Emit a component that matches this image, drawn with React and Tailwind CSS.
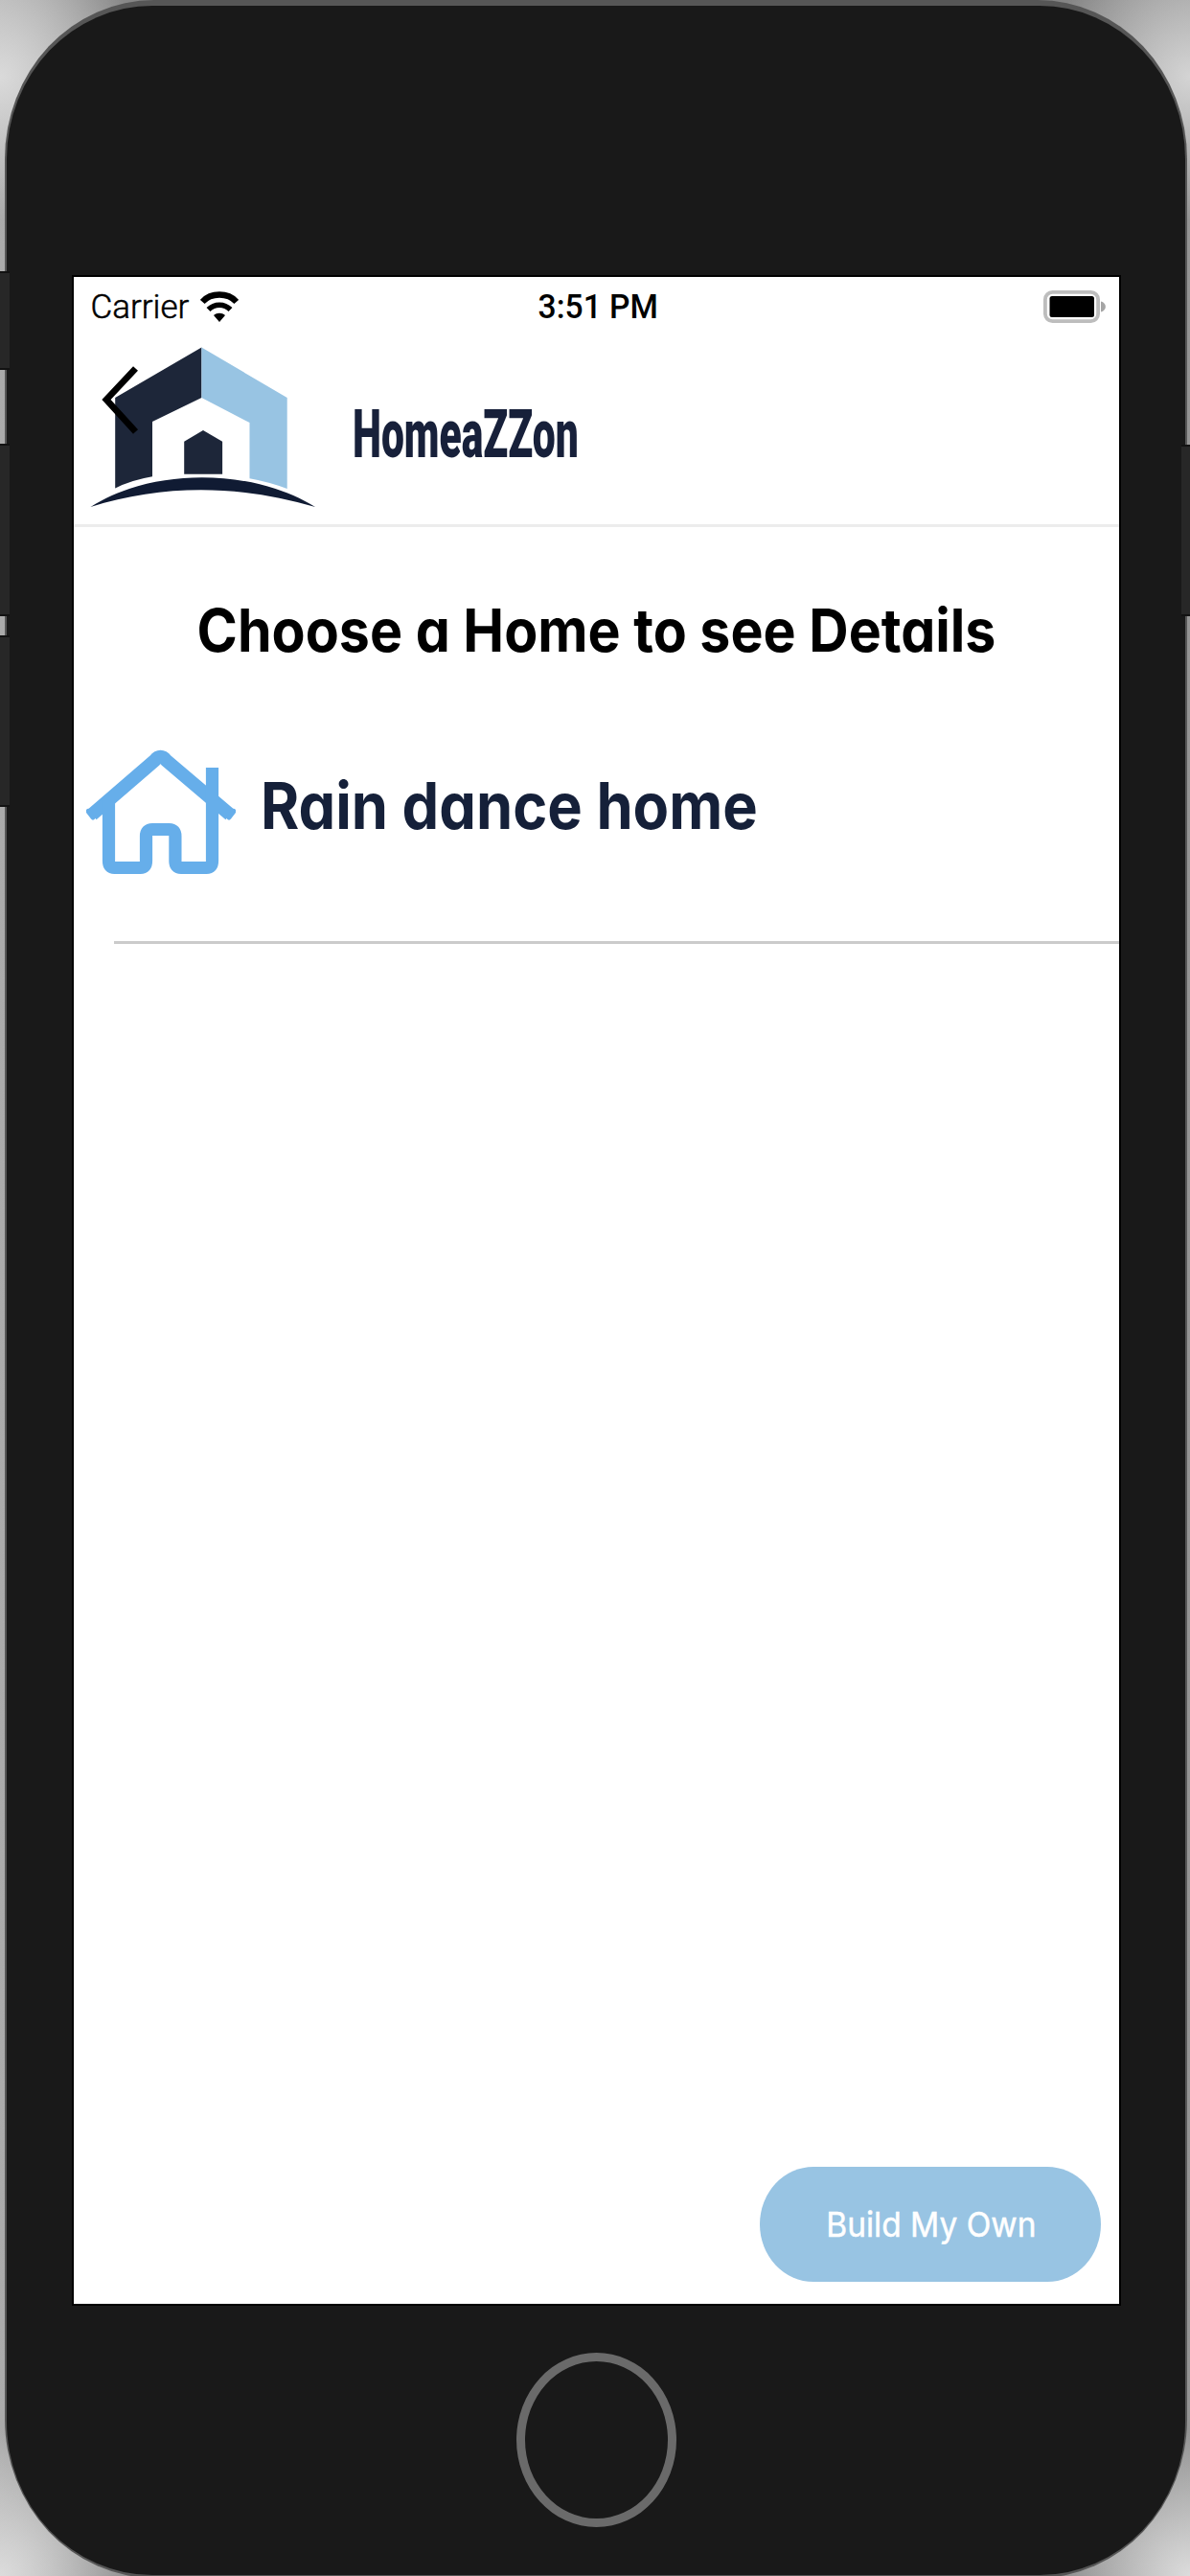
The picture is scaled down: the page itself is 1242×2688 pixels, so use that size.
import React from "react";

function SideButton({ className }) {
  return <div className={"absolute border-y-2 border-[#121212] bg-[#272727] " + className} />;
}

function WifiIcon() {
  return (
    <svg className="ml-[12px] h-8 w-10" viewBox="0 0 40 32" preserveAspectRatio="none" fill="none" stroke="#000" strokeWidth="6.4">
      <path d="M2.200 11 C11 1 29 1 37.800 11" />
      <path d="M8.500 19 C15 12.600 25 12.600 31.500 19" strokeWidth="5.600" />
      <path d="M14 25 C17.500 22 22.500 22 26 25 L20 32 Z" fill="#000" stroke="none" />
    </svg>
  );
}

function BatteryIcon() {
  return (
    <svg className="h-[34px] w-[66px]" viewBox="0 0 66 34">
      <rect x="1.900" y="1.900" width="55.200" height="30.200" rx="7.500" fill="#fff" stroke="#bdbdbd" strokeWidth="3.800" />
      <rect x="6.500" y="6" width="46.500" height="22" rx="2.500" fill="#000" />
      <path d="M60 11.500 C66.500 13 66.500 21 60 22.500 Z" fill="#a5a5a5" />
    </svg>
  );
}

function Logo() {
  return (
    <svg className="h-[170px] w-[236px] shrink-0" viewBox="94 361 236 170">
      <path d="M210.400 362.500 L120.200 415 V509.500 Q137 501 159 497.300 V440 L210.400 415 Z" fill="#1d2639" />
      <path d="M210.400 362.500 L299.700 415 V510 Q281 503 260.500 499.300 V441 L210.400 415 Z" fill="#98c4e3" />
      <path d="M212 449 L232.100 460.700 V494.700 H192.200 V460.700 Z" fill="#1d2639" />
      <path d="M94.500 529 C160 487 265 489 329 529 C250 505.500 170 505 94.500 529 Z" fill="#101b33" />
      <path d="M141.500 384.500 L111 417 L141.500 450.500" fill="none" stroke="#000" strokeWidth="6.800" />
    </svg>
  );
}

function HomeIcon() {
  return (
    <svg className="h-[131px] w-[156px] shrink-0" viewBox="90.500 781.500 156 131" fill="none" stroke="#66aeea" strokeWidth="13.200" strokeLinejoin="round">
      <path d="M96.500 849.500 L162 793 Q168 785.500 174 793 L240.500 849.500" strokeWidth="14" />
      <path d="M92.500 846 L97.500 852.500 M244.500 846 L239.500 852.500" strokeWidth="5" strokeLinecap="round" />
      <path d="M222 800.500 V898 Q222 905 216 905 H189.500 Q183.400 905 183.400 898 V872 Q183.400 865 177 865 H159.500 Q153 865 153 872 V898 Q153 905 147 905 H120 Q114 905 114 898 V834" />
    </svg>
  );
}

function StatusBar() {
  return (
    <div className="grid h-[62px] grid-cols-[1fr_auto_1fr] items-center pl-[18px] pr-[13px] font-['Roboto',sans-serif] text-[35px] leading-none text-black">
      <div className="flex items-center">
        <span className="font-light [-webkit-text-stroke:0.5px_#000]">Carrier</span>
        <WifiIcon />
      </div>
      <span className="inline-block origin-center scale-x-[.96] font-medium">3:51 PM</span>
      <div className="flex justify-end">
        <BatteryIcon />
      </div>
    </div>
  );
}

function Header() {
  return (
    <header className="flex h-[199px] items-start border-b-[3px] border-[#ececec] pl-[17px] pt-[10px]">
      <Logo />
      <span className="ml-[38px] mt-[57px] inline-block origin-left scale-x-[.608] whitespace-nowrap font-['Roboto',sans-serif] text-[70px] font-black leading-[70px] text-[#17203a]">
        HomeaZZon
      </span>
    </header>
  );
}

function HomeRow({ name }) {
  return (
    <div>
      <div className="flex items-start pl-[13px]">
        <HomeIcon />
        <span className="ml-[26px] mt-[26px] inline-block origin-left scale-x-[.916] whitespace-nowrap text-[67px] font-bold leading-[66px] text-[#152039]">
          {name}
        </span>
      </div>
      <div className="ml-[42px] mt-[69px] h-[3px] bg-[#cbcbcb]" />
    </div>
  );
}

export default function App() {
  return (
    <div className="relative h-[2688px] w-[1242px] overflow-hidden bg-[radial-gradient(150px_150px_at_0_80px,#dadada,transparent),radial-gradient(150px_150px_at_1242px_80px,#d4d4d4,transparent),radial-gradient(150px_150px_at_0_2688px,#dcdcdc,transparent),radial-gradient(150px_150px_at_1242px_2688px,#dcdcdc,transparent),linear-gradient(90deg,#ababab,#808080_160px,#808080_1080px,#949494)] pl-[5px] pr-[3px]">
      <div className="h-[2690px] rounded-[156px/166px] bg-[#565656] px-[2px] pt-[6px]">
        <div className="flex h-[2681px] flex-col items-center rounded-[152px/160px] bg-[#191919] pt-[283px]">
          <main className="flex h-[2115px] w-[1091px] shrink-0 flex-col bg-white font-['Inter',sans-serif] outline-2 outline-black [font-feature-settings:'cv11']">
            <StatusBar />
            <Header />
            <h1 className="mb-[93px] mt-[77px] scale-x-[.924] whitespace-nowrap text-center text-[62px] font-bold leading-[62px] text-black">
              Choose a Home to see Details
            </h1>
            <HomeRow name="Rain dance home" />
            <button className="mb-[23px] mr-[19px] mt-auto flex h-[120px] w-[356px] items-center justify-center self-end rounded-[56px/60px] bg-[#98c4e3] text-white">
              <span className="inline-block translate-x-px scale-x-[.93] whitespace-nowrap text-[36px] leading-none [-webkit-text-stroke:0.5px_#fff]">
                Build My Own
              </span>
            </button>
          </main>
          <div className="mt-[51px] h-[182px] w-[167px] rounded-[50%] border-[9px] border-[#6a6a6a]" />
        </div>
      </div>
      <SideButton className="left-0 top-[283px] h-[103px] w-[10px]" />
      <SideButton className="left-0 top-[463px] h-[180px] w-[10px]" />
      <SideButton className="left-0 top-[663px] h-[179px] w-[10px]" />
      <SideButton className="right-0 top-[464px] h-[179px] w-[9px]" />
    </div>
  );
}
